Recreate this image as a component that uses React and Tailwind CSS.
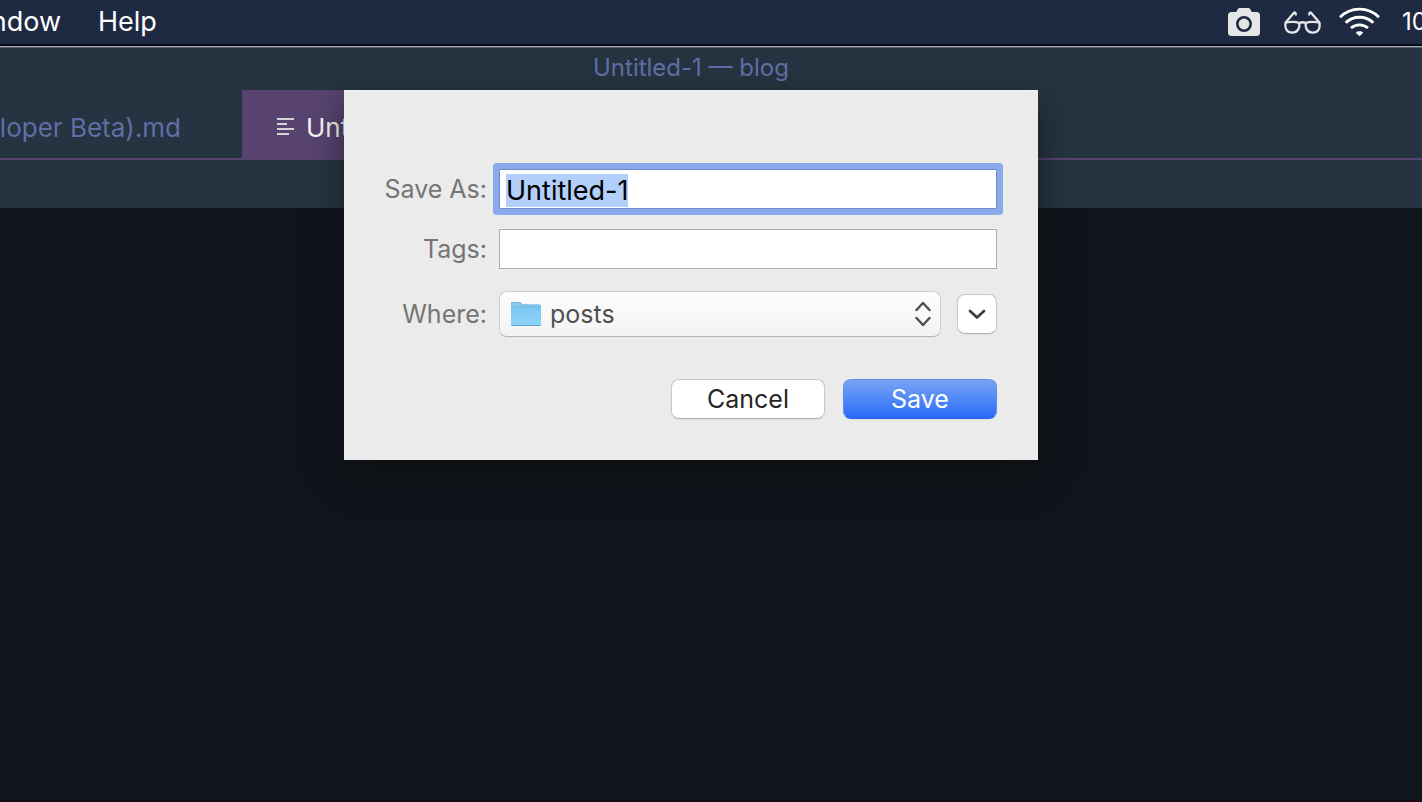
import React, { useEffect, useRef } from 'react';

function CameraIcon() {
    return (
        <svg width="32" height="28" viewBox="0 0 32 28" aria-hidden="true">
            <path
                fill="#e6e6e6"
                fillRule="evenodd"
                d="M9.5 1.6C10 .6 10.700 0 11.800 0h8.400c1.100 0 1.800.6 2.300 1.600l1.200 2.400H28.500A3.500 3.500 0 0 1 32 7.500v17a3.500 3.500 0 0 1-3.500 3.500h-25A3.500 3.500 0 0 1 0 24.500v-17A3.500 3.500 0 0 1 3.500 4h4.800zM16 8a8 8 0 1 0 0 16 8 8 0 0 0 0-16z"
            />
            <circle cx="16" cy="16" r="5.400" fill="#e6e6e6" />
        </svg>
    );
}

function GlassesIcon() {
    return (
        <svg width="37" height="23" viewBox="0 0 37 23" fill="none" stroke="#e6e6e6" strokeWidth="2.300" strokeLinecap="round" strokeLinejoin="round" aria-hidden="true">
            <path d="M1.500 12.200C3.500 10.600 12 10.600 15.200 12c.8 5-1.400 9.700-6.900 9.700S.8 17.500 1.500 12.200z" />
            <path d="M35.500 12.200C33.500 10.600 25 10.600 21.800 12c-.8 5 1.400 9.700 6.900 9.700s7.500-4.200 6.800-9.500z" />
            <path d="M15.200 12c2-.9 4.600-.9 6.600 0" />
            <path d="M1.800 11.200 9.800 1.900c1-.9 2-.2 2 1.700" />
            <path d="M35.200 11.200 27.200 1.900c-1-.9-2-.2-2 1.700" />
        </svg>
    );
}

function WifiIcon() {
    return (
        <svg width="41" height="30" viewBox="0 0 42 30" fill="none" stroke="#fff" strokeWidth="2.900" aria-hidden="true">
            <path d="M1 10.200C12-1 30-1 41 10.200" />
            <path d="M6.800 15.800c8-7.600 20.400-7.600 28.400 0" />
            <path d="M12.300 21.200c5-4.400 12.400-4.400 17.400 0" />
            <path d="M17.200 26c1.800-1.900 5.800-1.900 7.600 0L21 29.600z" fill="#fff" stroke="none" />
        </svg>
    );
}

function FileLinesIcon() {
    return (
        <svg width="17" height="19" viewBox="0 0 17 19" fill="#d4d4d4" aria-hidden="true">
            <rect x="0" y="0" width="17" height="2" />
            <rect x="0" y="5" width="10" height="2" />
            <rect x="0" y="10" width="17" height="2" />
            <rect x="0" y="15" width="12" height="2" />
        </svg>
    );
}

function FolderIcon() {
    return (
        <svg width="32" height="26" viewBox="0 0 32 26" aria-hidden="true">
            <defs>
                <linearGradient id="folder" x1="0" y1="0" x2="0" y2="1">
                    <stop offset="0" stopColor="#7cc8f3" />
                    <stop offset="1" stopColor="#8dd2f8" />
                </linearGradient>
            </defs>
            <path d="M1 2.500C1 1.500 1.500 1 2.500 1h7c2 0 2 2.500 4 2.500H29.500c1 0 1.500.5 1.500 1.500v19H1z" fill="#84c9ee" />
            <path d="M1.500 4V2.500c0-.6.400-1 1-1h7c2 0 2 2.500 4 2.500h16" fill="none" stroke="#72b8df" />
            <path d="M1 6h30v18c0 .6-.4 1-1 1H2c-.6 0-1-.4-1-1z" fill="url(#folder)" />
            <path d="M1 6h30" stroke="#6fb9e2" />
            <path d="M1.500 24.500h29" stroke="#5fa5cd" />
        </svg>
    );
}

function MenuBar() {
    return (
        <header className="flex h-[46px] items-center justify-between overflow-hidden border-b-2 border-[#050a1a] bg-[#1e2a42] text-[27px] leading-8 text-white">
            <nav className="flex gap-[37px]">
                <button className="flex w-[61px] justify-end">ndow</button>
                <button>Help</button>
            </nav>
            <div className="flex items-center">
                <button className="mr-6" aria-label="Screenshot"><CameraIcon /></button>
                <button className="mr-[18px]" aria-label="Reader"><GlassesIcon /></button>
                <button className="mr-[22px]" aria-label="Wi-Fi"><WifiIcon /></button>
                <time className="w-5 text-2xl">10</time>
            </div>
        </header>
    );
}

function Tabs() {
    return (
        <div role="tablist" className="flex h-[70px] border-b-2 border-[#584371] text-[26px]">
            <button role="tab" aria-selected="false" className="flex w-[242px] items-center justify-end overflow-hidden pt-1.5 pr-[61px] whitespace-nowrap text-[#5f6fa5]">
                loper Beta).md
            </button>
            <button role="tab" aria-selected="true" className="flex items-center gap-3 bg-[#584371] pt-1.5 pr-10 pl-[35px] text-[#f8f8f2]">
                <FileLinesIcon />
                Untitled-1
            </button>
        </div>
    );
}

function SaveDialog() {
    const nameRef = useRef(null);

    useEffect(() => {
        nameRef.current?.focus();
        nameRef.current?.select();
    }, []);

    return (
        <form
            role="dialog"
            aria-label="Save"
            onSubmit={(e) => e.preventDefault()}
            className="w-[694px] max-w-full bg-[#ebebeb] pt-[79px] pr-[41px] pb-[41px] pl-10 text-[25px] leading-8 text-[#757575] shadow-[0_14px_32px_rgba(12,16,14,0.6)]"
        >
            <div className="flex items-center gap-3">
                <label htmlFor="name" className="w-[103px] text-right whitespace-nowrap">Save As:</label>
                <input
                    id="name"
                    ref={nameRef}
                    defaultValue="Untitled-1"
                    className="h-10 min-w-0 flex-1 rounded-[1px] border border-[#6b8bd0] bg-white px-1.5 pt-0.5 text-[27px] text-black ring-6 ring-[#8aaaeb] outline-none selection:bg-[#b2d0fb] selection:text-black"
                />
            </div>
            <div className="mt-5 flex items-center gap-3">
                <label htmlFor="tags" className="w-[103px] text-right">Tags:</label>
                <input id="tags" className="h-10 min-w-0 flex-1 border border-[#b0b0b0] bg-white px-1.5 text-black outline-none" />
            </div>
            <div className="mt-[22px] flex items-center gap-3">
                <label htmlFor="where" className="w-[103px] text-right">Where:</label>
                <div className="flex min-w-0 flex-1 items-center gap-4">
                    <div className="relative flex-1">
                        <select id="where" className="h-[46px] w-full appearance-none rounded-lg border border-[#cfcfcf] border-b-[#b4b4b4] bg-linear-to-b from-[#fdfdfd] to-[#f3f3f3] pl-[50px] text-[#505050] outline-none">
                            <option>posts</option>
                        </select>
                        <span className="pointer-events-none absolute inset-y-0 left-[11px] flex items-center">
                            <FolderIcon />
                        </span>
                        <span className="pointer-events-none absolute inset-y-0 right-2.5 flex items-center">
                            <svg width="16" height="26" viewBox="0 0 16 26" fill="none" stroke="#505050" strokeWidth="2.500" strokeLinecap="round" strokeLinejoin="round" aria-hidden="true">
                                <path d="m1.500 9 6.500-7 6.500 7M1.500 17l6.500 7 6.500-7" />
                            </svg>
                        </span>
                    </div>
                    <button type="button" aria-label="Expand" className="flex size-10 items-center justify-center rounded-lg border border-[#c8c8c8] border-b-[#b4b4b4] bg-white shadow-xs">
                        <svg width="18" height="11" viewBox="0 0 18 11" fill="none" stroke="#404040" strokeWidth="2.800" strokeLinecap="round" strokeLinejoin="round" aria-hidden="true">
                            <path d="m2 2 7 6.500 7-6.500" />
                        </svg>
                    </button>
                </div>
            </div>
            <div className="mt-[42px] flex justify-end gap-[18px]">
                <button type="button" className="h-10 w-[154px] rounded-lg border border-[#c8c8c8] border-b-[#adadad] bg-white text-[#262626] shadow-xs">Cancel</button>
                <button type="submit" className="h-10 w-[154px] rounded-lg border border-[#5c8fe8] border-b-[#2a63ea] bg-linear-to-b from-[#77a3f3] to-[#286af8] text-white shadow-xs">Save</button>
            </div>
        </form>
    );
}

export default function App() {
    return (
        <div className="flex min-h-screen flex-col overflow-hidden bg-[#10141c] font-['Inter',sans-serif]">
            <MenuBar />
            <main className="flex flex-1 flex-col border-t border-b-2 border-t-[#a3a9b0] border-b-[#160911]">
                <h1 className="flex h-[43px] items-center justify-center border-t border-[#58636c] bg-[#263340] pr-10 pb-0.5 text-2xl text-[#5f6fa5]">
                    Untitled-1 — blog
                </h1>
                <div className="relative flex-1">
                    <div className="bg-[#263340]">
                        <Tabs />
                        <div className="h-12" />
                    </div>
                    <div className="absolute inset-x-0 top-0 flex justify-center pr-10">
                        <SaveDialog />
                    </div>
                </div>
            </main>
        </div>
    );
}
